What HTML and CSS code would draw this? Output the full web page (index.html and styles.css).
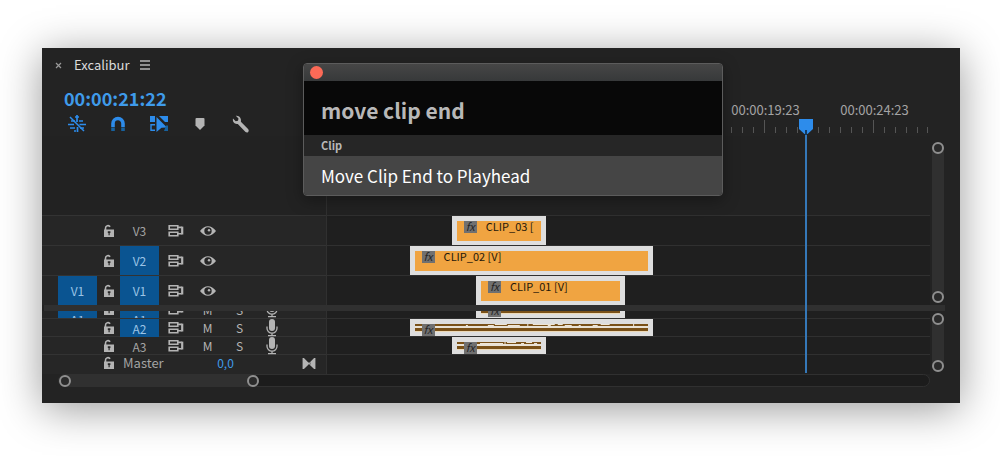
FILE: index.html
```html
<!DOCTYPE html>
<html lang="en">
<head>
<meta charset="utf-8">
<title>Excalibur</title>
<link rel="stylesheet" href="styles.css">
</head>
<body>
<svg class="defs" aria-hidden="true">
  <symbol id="lock" viewBox="0 0 12 14">
    <path d="M2.500 7V4.200a2.500 2.500 0 0 1 4.600-1.400" fill="none" stroke="currentColor" stroke-width="1.600"/>
    <path fill="currentColor" fill-rule="evenodd" d="M1 5.500h10V13H1zM4.800 7.300v1.700h.7v2.300h1.200V9h.7V7.300z"/>
  </symbol>
  <symbol id="sync" viewBox="0 0 16 14">
    <path d="M1.200 1.700h8.600v3.600H1.200zM1.200 8.200h8.600v3.600H1.200zM9.800 3.400h4M9.800 9.700h4" fill="none" stroke="currentColor" stroke-width="1.600"/>
    <path d="M14.200 2.600v7.900" stroke="currentColor" stroke-width="2.200"/>
  </symbol>
  <symbol id="eye" viewBox="0 0 16 12">
    <path fill="currentColor" fill-rule="evenodd" d="M0 6C4.500-.3 11.500-.3 16 6 11.500 12.300 4.500 12.300 0 6zM8 2.300a3.700 3.700 0 1 0 0 7.400 3.700 3.700 0 0 0 0-7.400z"/>
    <circle cx="9" cy="5.300" r="1.200" fill="currentColor"/>
  </symbol>
  <symbol id="mic" viewBox="0 0 12 18">
    <rect x="3" y="0" width="6" height="12" rx="3" fill="currentColor"/>
    <path d="M1 7.500v1.700a5 5 0 0 0 10 0V7.500M6 14v2.500M2 16.700h8" fill="none" stroke="currentColor" stroke-width="1.300"/>
  </symbol>
</svg>

<main class="panel">
  <section class="top">
    <div class="controls">
      <div class="tab">
        <button class="plain close" aria-label="Close panel"><svg width="7" height="7" viewBox="0 0 7 7"><path d="M1 1l5 5M6 1L1 6" stroke="currentColor" stroke-width="1.200"/></svg></button>
        <h1 class="title">Excalibur</h1>
        <button class="plain" aria-label="Panel menu"><svg width="10" height="10" viewBox="0 0 10 10"><path d="M0 1h10M0 5h10M0 9h10" stroke="currentColor" stroke-width="1.300"/></svg></button>
      </div>
      <div class="timecode">00:00:21:22</div>
      <div class="tools">
        <button class="plain tool on" aria-label="Insert as nests"><svg width="18" height="18" viewBox="0 0 18 18"><path d="M9 0v7M7 2h4M0 9.500h6M11.500 9.500H18M3 6h4M11 6h4M2 13h5M9.500 12v5M12 13h4M6 16h2" fill="none" stroke="currentColor" stroke-width="1.700"/><path d="M2 2l14 14" stroke="currentColor" stroke-width="1.500"/></svg></button>
        <button class="plain tool on" aria-label="Snap"><svg width="16" height="16" viewBox="0 0 16 16"><path d="M3 11V7.500a5 5 0 0 1 10 0V11" fill="none" stroke="currentColor" stroke-width="3.600"/><path d="M1.200 11.500h3.600V15H1.200zM11.200 11.500h3.600V15h-3.600z" fill="#17629f"/></svg></button>
        <button class="plain tool on" aria-label="Linked selection"><svg width="18" height="16" viewBox="0 0 18 16"><path fill="currentColor" d="M0 0h5v6H0zM9 0h9v6h-3zM6.500 1L17 11.500l-5.500.3L6.500 16z"/><path d="M5 8.700H1v5.600h4" fill="none" stroke="currentColor" stroke-width="1.400"/><path d="M16 9.500h2V15h-4z" fill="#17629f"/></svg></button>
        <button class="plain tool" aria-label="Add marker"><svg width="10" height="12" viewBox="0 0 10 12"><path fill="currentColor" d="M1.500 0h7q1 0 1 1v6.500L5 12 .5 7.500V1q0-1 1-1z"/></svg></button>
        <button class="plain tool" aria-label="Settings"><svg width="18" height="18" viewBox="0 0 18 18"><path fill="currentColor" d="M3.800.8l2.700 2.700-.5 2.300-2.300.5L1 3.600C.2 6.600 2.500 9.600 5.800 9L13.500 17q1.600 1 2.700-.1 1.100-1.200.1-2.700L8.900 6.700C9.700 3.200 7 .2 3.800.8z"/></svg></button>
      </div>
    </div>
    <div class="ruler">
      <div class="mark"><span>00:00:19:23</span><svg width="109" height="14" viewBox="0 0 109 14"><path d="M9.500 7v6M20.500 7v6M31.500 7v6M42.500 7v6M53.500 0v13M64.500 7v6M75.500 7v6M86.500 7v6M97.500 7v6M107.500 7v6" stroke="currentColor"/></svg></div>
      <div class="mark"><span>00:00:24:23</span><svg width="109" height="14" viewBox="0 0 109 14"><path d="M9.500 7v6M20.500 7v6M31.500 7v6M42.500 7v6M53.500 0v13M64.500 7v6M75.500 7v6M86.500 7v6M97.500 7v6M107.500 7v6" stroke="currentColor"/></svg></div>
    </div>
  </section>

  <section class="group">
    <div class="heads">
      <div class="spare"></div>
      <div class="head">
        <span></span><svg class="lock"><use href="#lock"/></svg><button class="patch">V3</button><svg class="sync"><use href="#sync"/></svg><svg class="eye"><use href="#eye"/></svg>
      </div>
      <div class="head">
        <span></span><svg class="lock"><use href="#lock"/></svg><button class="patch active">V2</button><svg class="sync"><use href="#sync"/></svg><svg class="eye"><use href="#eye"/></svg>
      </div>
      <div class="head">
        <button class="patch active">V1</button><svg class="lock"><use href="#lock"/></svg><button class="patch active">V1</button><svg class="sync"><use href="#sync"/></svg><svg class="eye"><use href="#eye"/></svg>
      </div>
    </div>
    <div class="lanes">
      <div class="spare"></div>
      <div class="lane"><div class="clip" style="left:20.7%;width:15.6%"><i class="fx">fx</i><span>CLIP_03 [</span></div></div>
      <div class="lane"><div class="clip" style="left:13.7%;width:40.4%"><i class="fx">fx</i><span>CLIP_02 [V]</span></div></div>
      <div class="lane"><div class="clip" style="left:24.7%;width:24.8%"><i class="fx">fx</i><span>CLIP_01 [V]</span></div></div>
    </div>
    <div class="vscroll"><i class="knob"></i><i class="knob"></i></div>
  </section>

  <div class="divider"></div>

  <section class="group audio">
    <div class="heads">
      <div class="head cut">
        <button class="patch active">A1</button><svg class="lock"><use href="#lock"/></svg><button class="patch active">A1</button><svg class="sync"><use href="#sync"/></svg><button class="flag">M</button><button class="flag">S</button><svg class="mic"><use href="#mic"/></svg>
      </div>
      <div class="head">
        <span></span><svg class="lock"><use href="#lock"/></svg><button class="patch active">A2</button><svg class="sync"><use href="#sync"/></svg><button class="flag">M</button><button class="flag">S</button><svg class="mic"><use href="#mic"/></svg>
      </div>
      <div class="head">
        <span></span><svg class="lock"><use href="#lock"/></svg><button class="patch">A3</button><svg class="sync"><use href="#sync"/></svg><button class="flag">M</button><button class="flag">S</button><svg class="mic"><use href="#mic"/></svg>
      </div>
      <div class="head master">
        <span></span><svg class="lock"><use href="#lock"/></svg><span class="name">Master</span><a class="level" href="#">0,0</a>
        <svg class="bow" viewBox="0 0 14 12"><path fill="currentColor" d="M0 0h1.500L6 4.500v3L1.500 12H0zM14 0h-1.500L8 4.500v3l4.500 4.500H14zM5.500 5h3v2h-3z"/></svg>
      </div>
    </div>
    <div class="lanes">
      <div class="lane cut"><div class="clip sound" style="left:24.7%;width:24.8%"><i class="fx">fx</i></div></div>
      <div class="lane"><div class="clip sound" style="left:13.7%;width:40.4%"><svg class="wave" viewBox="0 0 234 8" preserveAspectRatio="none"><path d="M51 1.500h2M73 1.500h6M80 .5h12M93 1.500h12M113 0v3M118 .5h22M133 1.500h3M143 .5h5M150 1.500h7M164 1.500h2M178 1.500h5M186 .5h9M219 0v3"/></svg><i class="fx">fx</i></div></div>
      <div class="lane"><div class="clip sound" style="left:20.7%;width:15.6%"><svg class="wave" viewBox="0 0 84 8" preserveAspectRatio="none"><path d="M23 1.500h23M48 0v3M50 .5h9M64 1.500h3M69 .5h6M77 1.500h3"/></svg><i class="fx">fx</i></div></div>
      <div class="lane"></div>
    </div>
    <div class="vscroll"><i class="knob"></i><i class="knob"></i></div>
  </section>

  <div class="hscroll"><div class="thumb"><i class="knob"></i><i class="knob"></i></div></div>

  <div class="playarea"><div class="playhead" style="left:79.3%"><svg width="14" height="16" viewBox="0 0 14 16"><path fill="#2d8ceb" d="M0 0h14v10l-5.500 5h-3L0 10z"/><path d="M7 11v5" stroke="#12395f" stroke-width="2"/></svg></div></div>

  <div class="dialog" role="dialog" aria-label="Command search">
    <div class="bar"><button class="plain dot" aria-label="Close"></button></div>
    <input class="query" type="text" aria-label="Search commands" value="move clip end">
    <div class="category">Clip</div>
    <button class="result">Move Clip End to Playhead</button>
  </div>
</main>
</body>
</html>
```
FILE: styles.css
```css
* { box-sizing: border-box; }

body {
  margin: 0;
  min-height: 100vh;
  padding: 48px 40px 0 42px;
  background: #fff;
  color: #b4b4b4;
  font-family: "Noto Sans CJK SC", "Noto Sans", sans-serif;
  font-size: 12px;
}

.defs { position: absolute; width: 0; height: 0; }
svg { display: block; }
i { font-style: normal; }

button {
  margin: 0;
  padding: 0;
  border: 0;
  background: none;
  color: inherit;
  font: inherit;
}
.plain { display: flex; align-items: center; justify-content: center; }

.panel {
  position: relative;
  padding-bottom: 16px;
  background: #232323;
  box-shadow: 0 6px 40px rgba(0, 0, 0, .4);
}

.top { display: flex; height: 88px; padding-right: 30px; }
.controls { width: 285px; flex: none; }
.tab { display: flex; align-items: center; height: 34px; padding-left: 12px; }
.close { width: 8px; color: #999; }
.title {
  margin: 0 11px 0 12px;
  font-size: 13px;
  font-weight: 400;
  line-height: 20px;
  color: #dcdcdc;
}
.timecode {
  padding-left: 22px;
  font-size: 18px;
  font-weight: 700;
  line-height: 32px;
  color: #3f9bea;
}
.tools { display: flex; padding: 1px 0 0 14px; }
.tool { width: 41px; height: 18px; color: #b4b4b4; }
.tool.on { color: #2d8ceb; }

.ruler {
  display: flex;
  flex: 1;
  justify-content: flex-end;
  align-items: flex-end;
  overflow: hidden;
  padding: 0 1px 2px 0;
}
.mark { width: 109px; color: #555; }
.mark span {
  display: block;
  text-align: center;
  font-size: 13px;
  line-height: 20px;
  color: #a4a4a4;
}

.group {
  display: grid;
  grid-template-columns: 285px 1fr 30px;
}
.heads { border-right: 1px solid #303030; }
.spare { height: 79px; background: #222; }

.head {
  display: grid;
  grid-template-columns: 39px 23px 39px 33px 31px 33px 32px;
  align-items: center;
  justify-items: center;
  height: 30px;
  padding-left: 16px;
  border-top: 1px solid #333;
  background: #262626;
}
.patch {
  align-self: stretch;
  justify-self: stretch;
  font-size: 12px;
  color: #a4a4a4;
}
.patch.active { background: #0a5491; color: #9cc4e6; }
.lock { width: 12px; height: 14px; }
.sync { width: 16px; height: 14px; }
.eye { width: 16px; height: 12px; }
.mic { width: 12px; height: 18px; }
.flag { font-size: 12px; line-height: 18px; }

.lanes { background: #1f1f1f; }
.lane { position: relative; height: 30px; border-top: 1px solid #303030; }

.clip {
  position: absolute;
  top: 0;
  bottom: 0;
  display: flex;
  border: 5px solid #dedede;
  border-bottom-width: 4px;
  background: #f0a441;
  color: #24180a;
  font-size: 11px;
  line-height: 10px;
  white-space: nowrap;
}
.fx {
  flex: none;
  width: 13px;
  height: 12px;
  margin: 0 9px 0 7px;
  background: #707070;
  color: #262626;
  font-size: 11px;
  font-style: italic;
  line-height: 11px;
  text-align: center;
}

.divider { height: 6px; margin: 0 15px 0 2px; background: #303030; }

.audio .head, .audio .lane { height: 18px; }
.audio .head.cut, .audio .lane.cut { height: 7px; border-top: 0; overflow: hidden; }
.audio .head.cut { align-items: start; }
.cut .patch { height: 18px; align-self: start; line-height: 18px; }
.cut .lock, .cut .sync { margin-top: -9px; }
.cut .flag { margin-top: -10px; }
.cut .mic { margin-top: -11px; }

.audio .head.master, .audio .lane:last-child { height: 20px; }
.audio .master { grid-template-columns: 39px 23px 47px 117px 49px; padding-bottom: 3px; }
.name { justify-self: start; padding-left: 3px; font-size: 13px; line-height: 16px; color: #a4a4a4; }
.level { color: #3f9bea; text-decoration: none; font-size: 12px; line-height: 16px; }
.bow { width: 14px; height: 11px; }

.sound {
  border-width: 5px 5px 4px;
  background: linear-gradient(#7a5118 0 2px, #e9e2d5 2px 4px, #7a5118 4px 7px, #ecd9b8 7px);
}
.sound .fx { position: relative; }
.cut .sound { border-top: 0; background: linear-gradient(#7a5118 0 2px, #ecd9b8 2px); }
.cut .fx { margin-top: -6px; }
.wave { position: absolute; left: 0; top: 0; width: 100%; height: 8px; }
.wave path { stroke: #efe6d6; stroke-width: 1; fill: none; }

.vscroll {
  display: flex;
  flex-direction: column;
  justify-content: space-between;
  width: 12px;
  margin: 6px 0 2px 2px;
  background: #303030;
  border-radius: 6px;
}
.audio .vscroll { margin: 2px 0 2px 2px; }
.knob {
  flex: none;
  width: 12px;
  height: 12px;
  border: 2px solid #8f8f8f;
  border-radius: 50%;
  background: #2a2a2a;
}

.hscroll {
  height: 13px;
  margin: 0 30px 0 16px;
  border: 1px solid #303030;
  border-radius: 7px;
  background: #1c1c1c;
}
.thumb {
  display: flex;
  justify-content: space-between;
  align-items: center;
  width: 23%;
  height: 11px;
  background: #303030;
  border-radius: 6px;
}

.playarea { position: absolute; top: 71px; bottom: 30px; left: 285px; right: 30px; pointer-events: none; }
.playhead { position: absolute; top: 0; bottom: 0; width: 2px; background: #3578b8; }
.playhead svg { margin-left: -6px; }

.dialog {
  position: absolute;
  top: 15px;
  left: 261px;
  width: 420px;
  overflow: hidden;
  border: 1px solid #5c5c5c;
  border-radius: 4px;
  background: #262626;
  box-shadow: 0 4px 16px rgba(0, 0, 0, .35);
}
.bar {
  display: flex;
  align-items: center;
  height: 17px;
  padding-left: 6px;
  background: linear-gradient(#464646, #37393a);
}
.dot { width: 13px; height: 13px; border-radius: 50%; background: #fc6a57; }
.query {
  display: block;
  width: 100%;
  height: 54px;
  padding: 4px 17px 0;
  border: 0;
  outline: 0;
  background: #080808;
  color: #b8b8b8;
  font: 700 21px/32px "Noto Sans CJK SC", "Noto Sans", sans-serif;
}
.category {
  padding-left: 17px;
  font-size: 11px;
  font-weight: 700;
  line-height: 21px;
  color: #b8b8b8;
}
.result {
  display: block;
  width: 100%;
  padding-left: 17px;
  background: #454545;
  color: #fff;
  font-size: 17px;
  line-height: 39px;
  text-align: left;
}
```
